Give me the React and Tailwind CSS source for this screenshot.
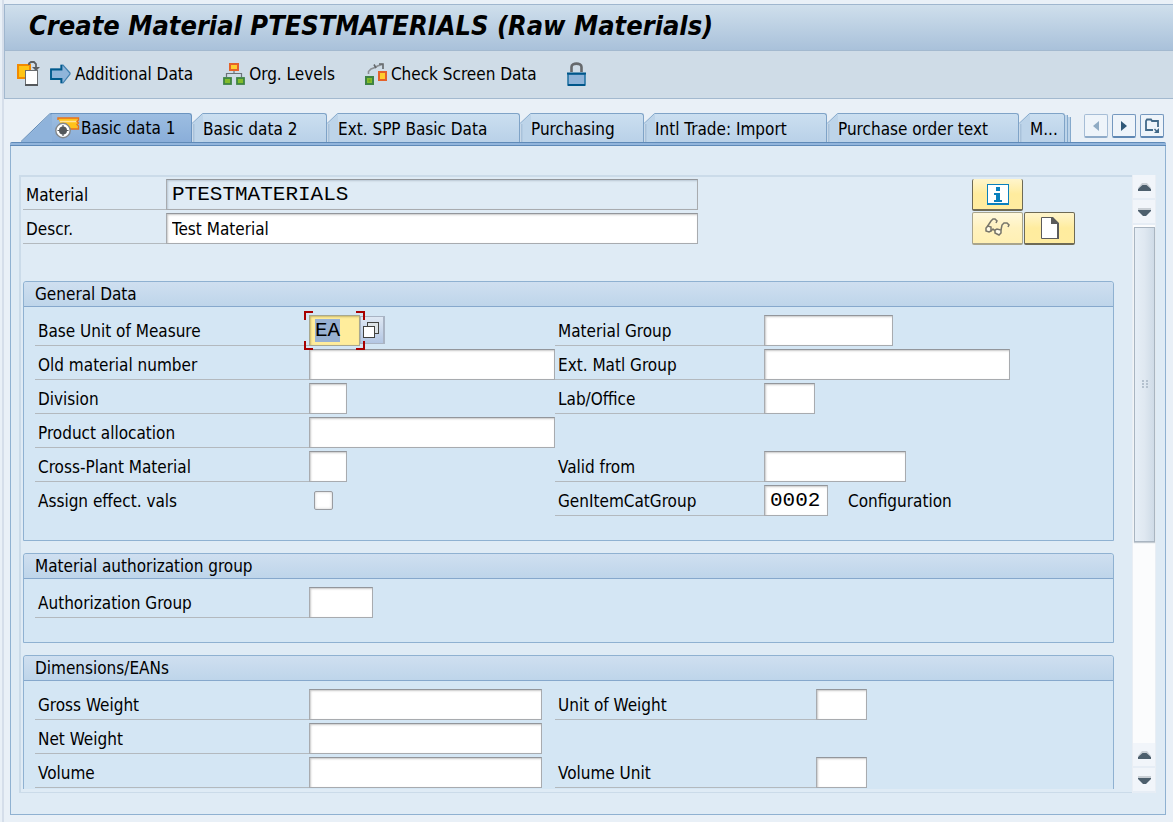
import { useEffect, useRef } from "react";

const LABEL_FONT = "font-['DejaVu_Sans_Condensed','Noto_Sans',sans-serif]";
const MONO_FONT = "font-['Liberation_Mono',monospace] text-[21px]";
const FIELD =
  "h-[31px] shrink-0 border border-[#a8abaf] border-t-[#93969b] bg-white px-[5px] text-black shadow-[inset_1px_1px_2px_#c8c8c8] outline-none";

/* ---------- Icons ---------- */

function OtherObjectIcon() {
  return (
    <svg width="24" height="26" viewBox="0 0 24 26" fill="none" aria-hidden="true">
      <rect x="1" y="4" width="12" height="13" fill="#ffc413" stroke="#f28a00" strokeWidth="2" />
      <path d="M12 4V2.500l2-1.500h3l2 2v4" stroke="#5c5f62" strokeWidth="1.800" />
      <path d="M15 6h8l-4 4z" fill="#5c5f62" />
      <rect x="8.500" y="9.500" width="12" height="14" fill="#fff" stroke="#6a6d70" />
      <path d="M8 24h13" stroke="#55585b" strokeWidth="2" />
    </svg>
  );
}

function ArrowIcon() {
  return (
    <svg width="21" height="20" viewBox="0 0 21 20" aria-hidden="true">
      <path d="M1 5h10V1h2l7 8v1l-7 9h-2v-4H1z" fill="#8fb5da" stroke="#3f7fae" strokeWidth="1.200" />
      <path d="M11.500 1v4.500H1V15h10.500v4" fill="none" stroke="#005a8c" strokeWidth="1.800" />
    </svg>
  );
}

function OrgIcon() {
  return (
    <svg width="22" height="22" viewBox="0 0 22 22" fill="none" aria-hidden="true">
      <path d="M11 8v3M3.500 14v-3.500h15V14" stroke="#6b7378" strokeWidth="1.200" />
      <rect x="7" y="1" width="8" height="6" fill="#ffce2e" stroke="#e4622a" strokeWidth="2" />
      <rect x="1" y="15" width="7" height="6" fill="#82bc2c" stroke="#3f8344" strokeWidth="1.800" />
      <rect x="14" y="15" width="7" height="6" fill="#82bc2c" stroke="#3f8344" strokeWidth="1.800" />
    </svg>
  );
}

function CheckIcon() {
  return (
    <svg width="22" height="22" viewBox="0 0 22 22" fill="none" aria-hidden="true">
      <path d="M3.500 11V8.500L6 6l4-1.500L12.500 3 17 1.500" stroke="#8b8f93" strokeWidth="1.600" />
      <path d="M9 1.500L11 5M14 1h4v5" stroke="#63676a" strokeWidth="1.600" />
      <rect x="1" y="14" width="7" height="7" fill="#82bc2c" stroke="#3f8344" strokeWidth="2" />
      <path d="M3.500 16.500h2v2h-2z" fill="#6aa516" />
      <rect x="14" y="9" width="7" height="8" fill="#ffce2e" stroke="#e4622a" strokeWidth="2" />
    </svg>
  );
}

function LockIcon() {
  return (
    <svg width="19" height="24" viewBox="0 0 19 24" fill="none" aria-hidden="true">
      <path d="M4.500 10V5c0-4.500 10-4.500 10 0v5" stroke="#66696c" strokeWidth="2.600" />
      <rect x="1" y="12" width="17" height="11" fill="#8fb3d8" stroke="#1c6fa0" strokeWidth="1.500" />
      <path d="M0 11.500h19M1 23h17" stroke="#00568a" strokeWidth="2" />
    </svg>
  );
}

function ActiveTabIcon() {
  return (
    <svg width="25" height="22" viewBox="0 0 25 22" aria-hidden="true">
      <path d="M3 1h20l-1 3 1.500 2L22 8l1 4H8z" fill="#ffc21c" />
      <path d="M5 4.500h17" stroke="#ffe59a" strokeWidth="1.500" />
      <path d="M3 3V1h20.500v2L22 4.500l1.500 1.500L22 7.500 23.500 9v3H15" fill="none" stroke="#e8721c" strokeWidth="1.400" />
      <circle cx="8" cy="13.500" r="7.200" fill="#fff" stroke="#84888b" strokeWidth="1.400" />
      <circle cx="8" cy="13.500" r="4" fill="#54585b" />
      <path d="M8 8v11M2.500 13.500h11" stroke="#54585b" strokeWidth="1.200" />
    </svg>
  );
}

function InfoIcon() {
  return (
    <svg width="22" height="21" viewBox="0 0 22 21" shapeRendering="crispEdges" aria-hidden="true">
      <path d="M0 0h22v21H0z" fill="#0a80bd" />
      <path d="M1 1h20v18H1z" fill="#fff" />
      <path d="M9 3h4v4H9zM7 9h6v7h2v2H7v-2h2v-5H7z" fill="#0a80bd" />
    </svg>
  );
}

function GlassesIcon() {
  return (
    <svg width="25" height="20" viewBox="0 0 25 20" fill="none" stroke="#77756a" strokeWidth="1.500" aria-hidden="true">
      <path d="M2 9l4-6 2-2h2l2 2-1 2" />
      <path d="M1 10l2-2 3 1v4l-2 1-3-1z" fill="#fffbe8" />
      <path d="M10 12l2-1 4 1v3l-2 2-4-2z" fill="#fffbe8" />
      <path d="M6 13l2-2 2 2M16 12l1-5 2-2h3l2 2-1 2" />
    </svg>
  );
}

function PageIcon() {
  return (
    <svg width="18" height="22" viewBox="0 0 18 22" aria-hidden="true">
      <path d="M.5.5H11l6 6v15H.5z" fill="#fff" stroke="#5b5b5b" />
      <path d="M10 0h2l6 6v16h-2V7h-6z" fill="#5b5b5b" />
    </svg>
  );
}

function MatchIcon() {
  return (
    <svg width="16" height="16" viewBox="0 0 16 16" stroke="#42423e" aria-hidden="true" shapeRendering="crispEdges">
      <rect x="4.500" y=".5" width="11" height="11" fill="#dde3e6" />
      <rect x=".5" y="4.500" width="11" height="11" fill="#fff" />
    </svg>
  );
}

function Triangle({ dir, className }) {
  const d = { left: "M6 0v10L0 5z", right: "M0 0v10l6-5z" }[dir];
  return (
    <svg width="6" height="10" viewBox="0 0 6 10" className={className} fill="currentColor" aria-hidden="true">
      <path d={d} />
    </svg>
  );
}

function ListIcon() {
  return (
    <svg width="16" height="16" viewBox="0 0 16 16" fill="none" stroke="#426988" strokeWidth="1.800" aria-hidden="true">
      <path d="M14 9V3H8L7 1.500H3L2 3v9h7" />
      <path d="M15 10v5h-5z" fill="#426988" stroke="none" />
      <path d="M10.500 11l3 3" strokeWidth="1.500" />
    </svg>
  );
}

/* ---------- Tabs ---------- */

const TABS = [
  { text: "Basic data 2", width: "w-[135px]" },
  { text: "Ext. SPP Basic Data", width: "w-[193px]" },
  { text: "Purchasing", width: "w-[124px]" },
  { text: "Intl Trade: Import", width: "w-[183px]" },
  { text: "Purchase order text", width: "w-[192px]" },
  { text: "M...", width: "w-[46px]" },
];

function Tab({ text, width }) {
  return (
    <button type="button" role="tab" aria-selected="false" className={`flex h-[29px] shrink-0 text-left ${width}`}>
      <svg width="11" height="29" viewBox="0 0 11 29" className="shrink-0" aria-hidden="true">
        <path d="M1 29V10L11 0v29z" fill="#bdd4e9" />
        <path d="M0 10.500L10.500 .5H11" fill="none" stroke="#85a9cc" />
        <path d="M1.500 29V11" stroke="#a9c2da" strokeWidth="2" />
      </svg>
      <span className="h-[29px] grow overflow-hidden whitespace-nowrap rounded-tr-[3px] border-r border-t border-[#7fa3c7] bg-linear-to-b from-[#cbdff0] to-[#b9d1e8] leading-[30px]">
        {text}
      </span>
    </button>
  );
}

function TabStrip() {
  const nav = "flex size-6 items-center justify-center rounded-[2px] border border-b-2 bg-[#eef4fa]";
  return (
    <div className="flex pl-[11px]">
      <div role="tablist" className="flex grow">
        <button type="button" role="tab" aria-selected="true" className="flex h-[29px] w-[171px] shrink-0 text-left">
          <svg width="31" height="29" viewBox="0 0 31 29" className="shrink-0" aria-hidden="true">
            <path d="M0 29L29 1l2-1v29z" fill="#8fb3db" />
            <path d="M0 28.500L28.500 1l2.500-.5" fill="none" stroke="#5f89b5" />
          </svg>
          <span className="flex h-[29px] grow items-center gap-px rounded-tr-[3px] border-r border-t border-[#6b94c0] bg-linear-to-b from-[#9cbde1] to-[#8aaed9] whitespace-nowrap leading-[30px]">
            <span className="-ml-px w-[29px] pl-1">
              <ActiveTabIcon />
            </span>
            Basic data 1
          </span>
        </button>
        {TABS.map((t) => (
          <Tab key={t.text} {...t} />
        ))}
        <span className="mt-[2px] h-[27px] w-[3px] border-r border-[#85a9cc] bg-[#bdd4e9]" />
        <span className="mt-1 h-[25px] w-[3px] border-r border-[#85a9cc] bg-[#bdd4e9]" />
      </div>
      <div className="flex shrink-0 gap-1 pr-[2px] pt-px">
        <button type="button" aria-label="Previous tab" className={`${nav} border-[#a6bdd6] border-b-[#8fabc9]`}>
          <Triangle dir="left" className="text-[#8fabc4]" />
        </button>
        <button type="button" aria-label="Next tab" className={`${nav} border-[#7598bf] border-b-[#5f87b3]`}>
          <Triangle dir="right" className="text-[#2f5878]" />
        </button>
        <button type="button" aria-label="Tab list" className={`${nav} border-[#7598bf] border-b-[#5f87b3]`}>
          <ListIcon />
        </button>
      </div>
    </div>
  );
}

/* ---------- Form parts ---------- */

function Row({ id, label, labelWidth, plain, children }) {
  return (
    <div className="flex h-[31px] items-end">
      <label
        htmlFor={id}
        className={`h-[31px] shrink-0 whitespace-nowrap pl-[3px] leading-8 ${labelWidth} ${plain ? "" : "border-b border-[#b3b9be]"}`}
      >
        {label}
      </label>
      {children}
    </div>
  );
}

function TextRow({ id, label, labelWidth, width, value }) {
  return (
    <Row id={id} label={label} labelWidth={labelWidth}>
      <input id={id} type="text" defaultValue={value} className={`${FIELD} ${MONO_FONT} ${width}`} />
    </Row>
  );
}

function Group({ title, className, children }) {
  return (
    <section className={`shrink-0 rounded-t-[3px] border border-[#8fb1d1] bg-[#d4e6f4] ${className}`}>
      <h2 className="h-[25px] rounded-t-[3px] border-b border-[#86a8cc] bg-linear-to-b from-[#cfdff0] to-[#bed5ea] pl-[11px] leading-6">
        {title}
      </h2>
      <div className="grid grid-cols-[520px_1fr] gap-y-[3px] pl-[11px] pt-2">{children}</div>
    </section>
  );
}

function BaseUnitRow() {
  const ref = useRef(null);
  useEffect(() => {
    ref.current.focus();
    ref.current.select();
  }, []);
  const corner = "pointer-events-none absolute size-[9px] border-[#a80000]";
  return (
    <Row id="base-unit" label="Base Unit of Measure" labelWidth="w-[274px]">
      <div className="relative shrink-0">
        <input
          id="base-unit"
          ref={ref}
          type="text"
          defaultValue="EA"
          className={`block h-[31px] w-[51px] border border-[#a8a890] bg-[#ffed9c] px-[5px] text-black shadow-[inset_1px_1px_2px_#c9b96a] outline-none selection:bg-[#98b1d2] selection:text-black ${MONO_FONT}`}
        />
        <span className={`${corner} -left-[5px] -top-1 border-l-2 border-t-2`} />
        <span className={`${corner} -right-[5px] -top-1 border-r-2 border-t-2`} />
        <span className={`${corner} -bottom-1 -left-[5px] border-b-2 border-l-2`} />
        <span className={`${corner} -bottom-1 -right-[5px] z-10 border-b-2 border-r-2`} />
      </div>
      <button
        type="button"
        aria-label="Possible entries"
        className="mb-[2px] flex h-7 w-[25px] items-center border border-[#a9b4c4] border-r-2 bg-linear-to-b from-[#dfe8f3] to-[#b3c6e3] pl-[2px]"
      >
        <MatchIcon />
      </button>
    </Row>
  );
}

function ScrollButton({ up }) {
  return (
    <button
      type="button"
      aria-label={up ? "Scroll up" : "Scroll down"}
      className="flex h-[25px] w-full shrink-0 items-center justify-center border-b-2 border-[#e6edf5] bg-[#f1f5fa]"
    >
      <svg width="13" height="8" viewBox="0 0 13 8" aria-hidden="true">
        {up ? (
          <>
            <path d="M0 5L4 0h5l4 5z" fill="#c9cfd5" />
            <path d="M0 8V6l4.500-4h4L13 6v2z" fill="#4d5f6d" />
          </>
        ) : (
          <>
            <path d="M0 0h13v2H0z" fill="#c9cfd5" />
            <path d="M0 2h13v1L8 8H5L0 3z" fill="#4d5f6d" />
          </>
        )}
      </svg>
    </button>
  );
}

function ScrollBar() {
  return (
    <div className="flex w-6 shrink-0 flex-col border-x border-[#e9eef4] bg-[#fbfcfd]">
      <ScrollButton up />
      <ScrollButton />
      <div className="min-h-0 grow pl-px pt-[2px]">
        <div className="flex h-[61%] w-full flex-col items-center justify-center border border-[#a9b5c1] bg-linear-to-r from-[#e6eef6] via-[#dfe8f1] to-[#cfdbe7] shadow-[0_1px_1px_#c5ccd3]">
          <svg width="6" height="9" viewBox="0 0 6 9" fill="#b4c1ce" aria-hidden="true">
            <path d="M0 0h2v2H0zM4 0h2v2H4zM0 3h2v2H0zM4 3h2v2H4zM0 6h2v2H0zM4 6h2v2H4z" />
          </svg>
        </div>
      </div>
      <ScrollButton up />
      <ScrollButton />
    </div>
  );
}

const YELLOW = "flex w-[51px] items-center justify-center rounded-[2px] border border-b-2 bg-linear-to-b";
const YELLOW_ON = "from-[#fff5cc] via-[#ffec9e] to-[#ffeca0] border-[#6e6a55]";
const YELLOW_OFF = "from-[#fff8dc] via-[#fff2be] to-[#fff0b4] border-[#a8a48c]";

export default function App() {
  return (
    <main className={`flex h-screen flex-col bg-[#e9f0f7] pl-[2px] text-[17px] leading-6 text-black ${LABEL_FONT}`}>
      <div className="flex min-h-0 grow flex-col border-l-2 border-[#d5deea] pt-1">
        <header className="h-[46px] shrink-0 border-l border-t border-[#9fb6ce] bg-linear-to-b from-[#cfdfec] to-[#a9c1da] pl-6">
          <h1 className="whitespace-nowrap text-[27px] font-bold italic leading-[42px]">
            Create Material PTESTMATERIALS (Raw Materials)
          </h1>
        </header>

        <nav className="flex h-[49px] shrink-0 items-center border-y border-l border-[#a3b9cf] bg-[#cfdce7] pb-[2px] pl-3">
          <button type="button" aria-label="Select other material" className="mr-[9px]">
            <OtherObjectIcon />
          </button>
          <button type="button" className="mr-[30px] flex items-center gap-1">
            <ArrowIcon />
            Additional Data
          </button>
          <button type="button" className="mr-[30px] flex items-center gap-1">
            <OrgIcon />
            Org. Levels
          </button>
          <button type="button" className="mr-[30px] flex items-center gap-1">
            <CheckIcon />
            Check Screen Data
          </button>
          <button type="button" aria-label="Lock">
            <LockIcon />
          </button>
        </nav>

        <div className="mb-[7px] ml-[6px] mr-[7px] mt-[14px] flex min-h-0 grow flex-col">
          <TabStrip />
          <div className="h-1 shrink-0 rounded-t-[2px] border-y border-[#5f8ab8] bg-[#92b5dc]" />
          <div className="flex min-h-0 grow border border-t-0 border-[#8fb1d1] bg-[#dfebf5] pb-[21px] pl-2 pr-[9px] pt-[29px]">
            <div className="flex min-w-0 grow flex-col overflow-hidden border-l-2 border-t-2 border-b border-[#cbdbe9] pb-[3px] pl-[2px] pr-[18px]">
              <div className="flex min-h-0 grow flex-col overflow-hidden pt-[2px]">
                <div className="flex shrink-0">
                  <div className="flex flex-col gap-[3px]">
                    <Row id="material" label="Material" labelWidth="w-[143px]">
                      <input
                        id="material"
                        type="text"
                        readOnly
                        value="PTESTMATERIALS"
                        className={`h-[31px] w-[532px] border border-[#a8abaf] border-t-[#93969b] bg-[#dfebf5] px-[5px] shadow-[inset_1px_1px_2px_#b9c6d2] outline-none ${MONO_FONT}`}
                      />
                    </Row>
                    <Row id="descr" label="Descr." labelWidth="w-[143px]">
                      <input id="descr" type="text" defaultValue="Test Material" className={`${FIELD} w-[532px]`} />
                    </Row>
                  </div>
                  <div className="ml-[274px] grid grid-cols-2 gap-px">
                    <button type="button" aria-label="Information" className={`${YELLOW} ${YELLOW_ON} h-8 border-t-0`}>
                      <InfoIcon />
                    </button>
                    <span />
                    <button type="button" aria-label="Display" disabled className={`${YELLOW} ${YELLOW_OFF} h-[33px]`}>
                      <GlassesIcon />
                    </button>
                    <button type="button" aria-label="Create" className={`${YELLOW} ${YELLOW_ON} h-[33px]`}>
                      <PageIcon />
                    </button>
                  </div>
                </div>

                <Group title="General Data" className="mt-9 h-[260px]">
                  <BaseUnitRow />
                  <TextRow id="mat-group" label="Material Group" labelWidth="w-[209px]" width="w-[129px]" />
                  <TextRow id="old-number" label="Old material number" labelWidth="w-[274px]" width="w-[246px]" />
                  <TextRow id="ext-group" label="Ext. Matl Group" labelWidth="w-[209px]" width="w-[246px]" />
                  <TextRow id="division" label="Division" labelWidth="w-[274px]" width="w-[38px]" />
                  <TextRow id="lab" label="Lab/Office" labelWidth="w-[209px]" width="w-[51px]" />
                  <TextRow id="allocation" label="Product allocation" labelWidth="w-[274px]" width="w-[246px]" />
                  <span />
                  <TextRow id="cross-plant" label="Cross-Plant Material" labelWidth="w-[274px]" width="w-[38px]" />
                  <TextRow id="valid-from" label="Valid from" labelWidth="w-[209px]" width="w-[142px]" />
                  <Row id="effect-vals" label="Assign effect. vals" labelWidth="w-[279px]" plain>
                    <span className="flex h-[31px] items-center">
                      <input
                        id="effect-vals"
                        type="checkbox"
                        className="size-[19px] appearance-none rounded-[2px] border border-[#999ca1] bg-white shadow-[inset_0_0_3px_#c8c8c8]"
                      />
                    </span>
                  </Row>
                  <Row id="item-cat" label="GenItemCatGroup" labelWidth="w-[209px]">
                    <input id="item-cat" type="text" defaultValue="0002" className={`${FIELD} ${MONO_FONT} w-16`} />
                    <span className="h-[31px] pl-5 leading-8">Configuration</span>
                  </Row>
                </Group>

                <Group title="Material authorization group" className="mt-3 h-[90px]">
                  <TextRow id="auth-group" label="Authorization Group" labelWidth="w-[274px]" width="w-16" />
                </Group>

                <Group title="Dimensions/EANs" className="mt-3 h-[260px]">
                  <TextRow id="gross" label="Gross Weight" labelWidth="w-[274px]" width="w-[233px]" />
                  <TextRow id="unit-weight" label="Unit of Weight" labelWidth="w-[261px]" width="w-[51px]" />
                  <TextRow id="net" label="Net Weight" labelWidth="w-[274px]" width="w-[233px]" />
                  <span />
                  <TextRow id="volume" label="Volume" labelWidth="w-[274px]" width="w-[233px]" />
                  <TextRow id="unit-volume" label="Volume Unit" labelWidth="w-[261px]" width="w-[51px]" />
                </Group>
              </div>
            </div>
            <ScrollBar />
          </div>
        </div>
      </div>
    </main>
  );
}
